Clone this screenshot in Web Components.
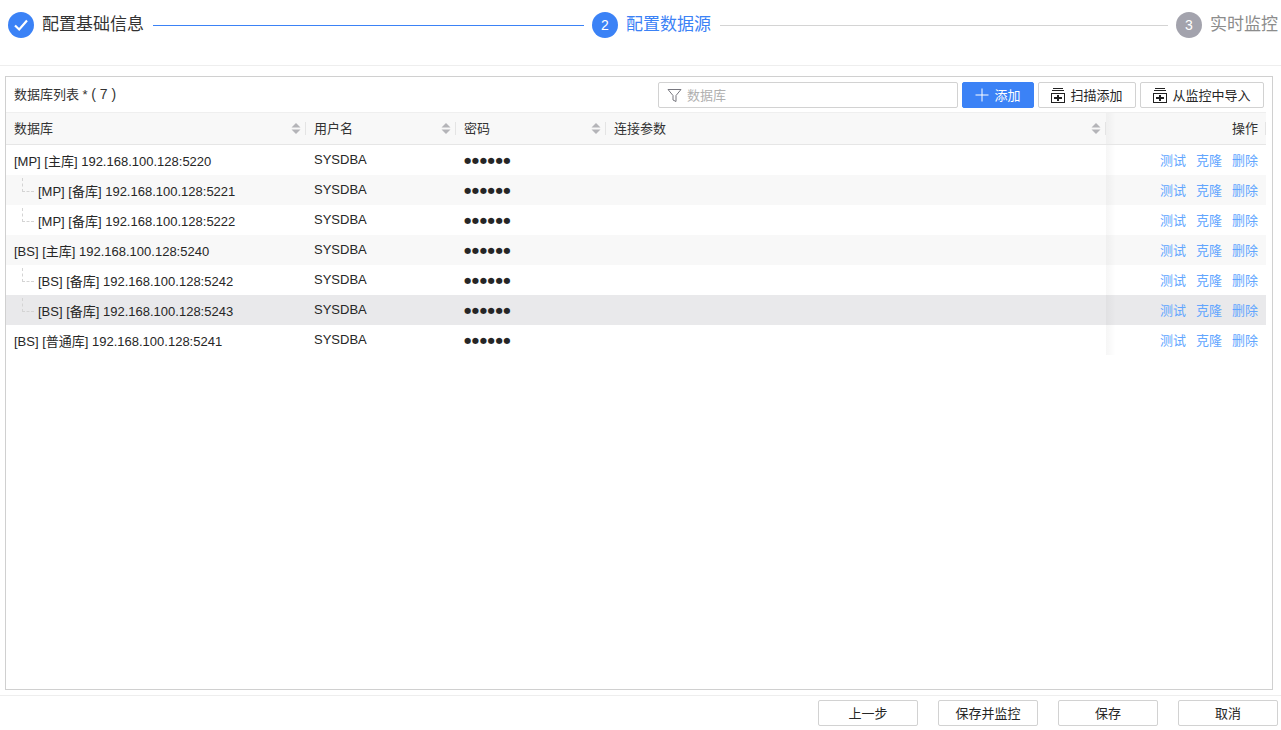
<!DOCTYPE html>
<html lang="zh-CN">
<head>
<meta charset="utf-8">
<title>配置数据源</title>
<style>
html,body{margin:0;padding:0;height:100%;background:#fff;font-family:"Liberation Sans","Noto Sans CJK SC",sans-serif;font-size:13px;color:#262626;overflow:hidden}
</style>
</head>
<body>
<app-shell>
  <step-bar slot="steps">
    <step-item state="done" title-text="配置基础信息"></step-item>
    <step-item state="current" num="2" title-text="配置数据源"></step-item>
    <step-item state="todo" num="3" title-text="实时监控" last></step-item>
  </step-bar>
  <db-panel slot="main" count="7">
    <db-row name="[MP] [主库] 192.168.100.128:5220"></db-row>
    <db-row tree striped name="[MP] [备库] 192.168.100.128:5221"></db-row>
    <db-row tree name="[MP] [备库] 192.168.100.128:5222"></db-row>
    <db-row striped name="[BS] [主库] 192.168.100.128:5240"></db-row>
    <db-row tree name="[BS] [备库] 192.168.100.128:5242"></db-row>
    <db-row tree selected name="[BS] [备库] 192.168.100.128:5243"></db-row>
    <db-row name="[BS] [普通库] 192.168.100.128:5241"></db-row>
  </db-panel>
  <app-btn slot="footer" wide>上一步</app-btn>
  <app-btn slot="footer" wide>保存并监控</app-btn>
  <app-btn slot="footer" wide>保存</app-btn>
  <app-btn slot="footer" wide>取消</app-btn>
</app-shell>
<script>
const FONT='"Liberation Sans","Noto Sans CJK SC",sans-serif';
function def(name,html,extra){
  class C extends HTMLElement{
    constructor(){super();this.attachShadow({mode:'open'});this.shadowRoot.innerHTML=html;}
    connectedCallback(){extra&&extra.call(this,this.shadowRoot);}
  }
  customElements.define(name,C);
}
def('app-shell',`<style>
:host{display:flex;flex-direction:column;height:730px;box-sizing:border-box}
.steps{height:66px;box-sizing:border-box;border-bottom:1px solid #eee;padding:12px 3px 0 8px;flex:none}
.main{flex:1;min-height:0;display:flex;padding:10px 8px 5px 5px}
.foot{flex:none;height:35px;box-sizing:border-box;border-top:1px solid #eee;padding:4px 3px 0 0;display:flex;justify-content:flex-end;gap:20px}
</style>
<div class="steps"><slot name="steps"></slot></div>
<div class="main"><slot name="main"></slot></div>
<div class="foot"><slot name="footer"></slot></div>`);
def('step-bar',`<style>:host{display:flex;align-items:center;height:26px}</style><slot></slot>`);
def('step-item',`<style>
:host{display:flex;align-items:center;flex:1;min-width:0;font:17px/26px ${FONT}}
:host([last]){flex:none}
.c{width:26px;height:26px;border-radius:50%;flex:none;display:flex;align-items:center;justify-content:center;color:#fff;font-size:14px;background:#3b82f6}
.t{margin-left:8px;white-space:nowrap;color:#333}
.l{flex:1;height:1px;background:#d4d4d4;margin:0 8px 0 9px}
:host([state=done]) .l{background:#3b82f6}
:host([state=current]) .t{color:#3b82f6}
:host([state=todo]) .c{background:#a3a3ad}
:host([state=todo]) .t{color:#8c8c8c}
:host([last]) .l{display:none}
svg{display:block}
</style><span class="c"></span><span class="t"></span><span class="l"></span>`,function(r){
  r.querySelector('.t').textContent=this.getAttribute('title-text');
  const c=r.querySelector('.c');
  if(this.getAttribute('state')==='done')c.innerHTML='<svg width="16" height="14" viewBox="0 0 16 14"><path d="M2 7.5 6.2 11.5 14 2.5" fill="none" stroke="#fff" stroke-width="2.2"/></svg>';
  else c.textContent=this.getAttribute('num');
});
def('app-btn',`<style>
:host{display:inline-flex;align-items:center;justify-content:center;box-sizing:border-box;height:26px;padding:0 12px;border:1px solid #d2d2d2;border-radius:2px;background:#fff;color:#262626;font:13px/24px ${FONT};white-space:nowrap;gap:4px}
:host([wide]){width:100px;padding:0}
:host([primary]){background:#3b82f6;border-color:#3b82f6;color:#fff}
.t{display:block;padding-top:2px;line-height:22px}
svg{display:block}
</style><slot name="icon"></slot><span class="t"><slot></slot></span>`);
const SORT=`<svg class="s" width="10" height="13" viewBox="0 0 10 13"><path d="M5 1 9.5 5.5H.5z" fill="#b4b4b8"/><path d="M5 12 9.5 7.5H.5z" fill="#b4b4b8"/></svg>`;
const PLUSBOX=`<svg slot="icon" width="14" height="16" viewBox="0 0 14 16" style="margin-right:1px"><path d="M2 1.5H12M1 3.5H13" stroke="#222" fill="none"/><rect x=".5" y="6.5" width="13" height="9" fill="#fff" stroke="#222"/><path d="M3 11H11M7 8V14" stroke="#222" stroke-width="2" fill="none"/></svg>`;
def('db-panel',`<style>
:host{display:flex;flex-direction:column;flex:1;min-width:0;box-sizing:border-box;border:1px solid #d0d0d0;background:#fff}
.bar{flex:none;height:35px;box-sizing:border-box;padding:5px 8px 0 8px;display:flex;gap:4px;width:1266px}
.ttl{flex:1;line-height:24px;color:#333;font-size:13px;white-space:pre}
.ttl b{font-weight:400;font-size:14px}
.inp{box-sizing:border-box;width:300px;height:26px;border:1px solid #d2d2d2;border-radius:2px;display:flex;align-items:center;gap:5px;padding-left:8px;color:#b0b0b0;font-size:13px}
.inp span{margin-top:-2px}
.head{flex:none;width:1260px;display:grid;grid-template-columns:300px 150px 150px 500px 160px;height:33px;box-sizing:border-box;background:#f8f8f8;border-top:1px solid #efefef;border-bottom:1px solid #e6e6e6}
.h{display:flex;align-items:center;justify-content:space-between;padding:0 5px 2px 8px;position:relative;color:#333}
.h svg{margin-top:2px}
.h::after{content:"";width:1px;height:13px;background:#e4e4e4;margin-left:0;position:absolute;right:0;top:9px}
.op{justify-content:flex-end;padding-right:8px;background:linear-gradient(to right,rgba(0,0,0,.035),transparent 10px)}
svg{display:block}
</style>
<div class="bar"><span class="ttl"></span>
<div class="inp"><svg width="15" height="15" viewBox="0 0 15 15"><path d="M1 1.5H14L9 7.5V13.5L6 12V7.5z" fill="none" stroke="#77777f"/></svg><span>数据库</span></div>
<app-btn primary style="width:72px;padding:0"><svg slot="icon" width="14" height="14" viewBox="0 0 14 14" style="margin-right:1px"><path d="M7 .5V13.5M.5 7H13.5" stroke="#fff" fill="none"/></svg>添加</app-btn>
<app-btn style="width:98px;padding:0">${PLUSBOX}扫描添加</app-btn>
<app-btn style="width:124px;padding:0">${PLUSBOX}从监控中导入</app-btn>
</div>
<div class="head">
<div class="h">数据库${SORT}</div><div class="h">用户名${SORT}</div><div class="h">密码${SORT}</div><div class="h">连接参数${SORT}</div><div class="h op">操作</div>
</div>
<slot></slot>`,function(r){
  const t=r.querySelector('.ttl');
  t.textContent='数据库列表 * ';
  const b=document.createElement('b');
  b.textContent='( '+this.getAttribute('count')+' )';
  t.appendChild(b);
});
def('db-row',`<style>
:host{display:grid;grid-template-columns:300px 150px 150px 500px 160px;width:1260px;height:30px;flex:none;background:#fff;color:#262626;font-size:13px}
:host([striped]){background:#f8f8f8}
:host([selected]){background:#e9e9eb}
.c{display:flex;align-items:center;padding-left:8px;white-space:nowrap;min-width:0}
.u{padding-bottom:2px}
.i{display:none;width:12px;height:14px;box-sizing:border-box;border-left:1px dashed #d4d4d4;border-bottom:1px dashed #d4d4d4;align-self:flex-start;margin:3px 4px 0 8px}
:host([tree]) .i{display:block}
.p{font-family:"DejaVu Sans",sans-serif;font-size:8.2px;letter-spacing:.7px}
.o{justify-content:flex-end;gap:10px;padding:0 8px 2px 0;background:linear-gradient(to right,rgba(0,0,0,.035),transparent 10px)}
.o span{color:#62a6ff}
</style>
<div class="c n"><span class="i"></span><span class="t"></span></div>
<div class="c u">SYSDBA</div>
<div class="c p">●●●●●●</div>
<div class="c"></div>
<div class="c o"><span>测试</span><span>克隆</span><span>删除</span></div>`,function(r){
  r.querySelector('.t').textContent=this.getAttribute('name');
});
</script>
</body>
</html>
